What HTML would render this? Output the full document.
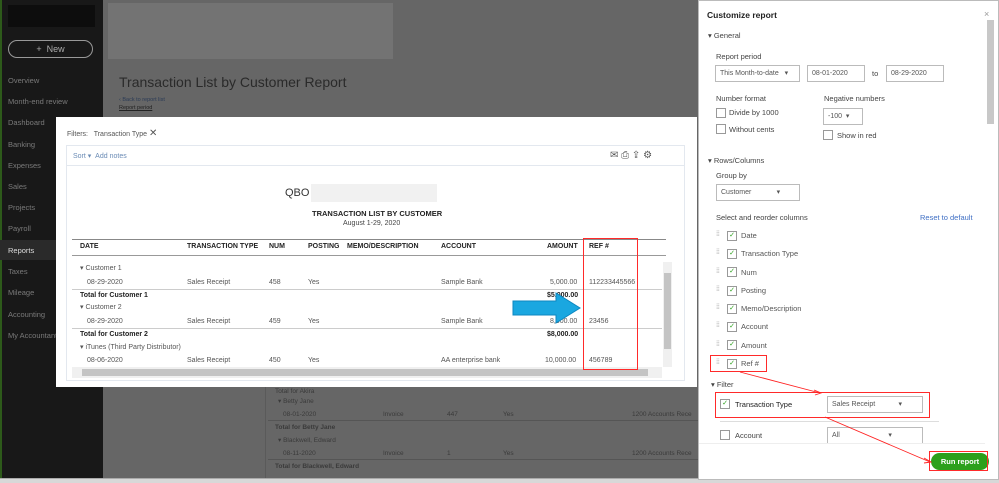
<!DOCTYPE html>
<html><head><meta charset="utf-8"><style>
*{margin:0;padding:0;box-sizing:border-box}
body{width:999px;height:483px;overflow:hidden;position:relative;background:#666;font-family:"Liberation Sans",sans-serif;font-size:8px;color:#333}
.a{position:absolute;white-space:nowrap}
.side{left:0;top:0;width:103px;height:478px;background:#181818;border-left:2px solid #2d5a1a}
.nav{left:8px;color:#7a7a7a;font-size:7.5px}
.th{font-weight:bold;font-size:7px;color:#222;top:243px}
.td{font-size:7px;color:#555}
.tb{font-size:7px;color:#222;font-weight:bold}
.cb{width:10px;height:10px;border:1px solid #999;background:#fff}
.ck{width:10px;height:10px;border:1px solid #999;background:#fff;color:#2ca01c;font-size:7px;line-height:8px;text-align:center}
.lbl{font-size:7.5px;color:#444}
.inp{border:1px solid #bbb;background:#fff;font-size:7px;color:#555;padding:0 4px;line-height:15px;height:17px}
.red{border:1.5px solid #ff2a2a !important;background:transparent}
.dim{color:#3a3a3a;font-size:6.5px}
.hd{left:716px;font-size:7px;color:#bbb;letter-spacing:-1px}
.cl{left:741px;font-size:7.5px;color:#555}
</style></head><body>
<div class="a side"></div>
<div class="a" style="left:8px;top:5px;width:87px;height:22px;background:#0d0d0d"></div>
<div class="a" style="left:8px;top:40px;width:85px;height:18px;border:1px solid #999;border-radius:9px;color:#aaa;font-size:9px;text-align:center;line-height:16px">+&nbsp; New</div>
<div class="a nav" style="top:76px">Overview</div>
<div class="a nav" style="top:97px">Month-end review</div>
<div class="a nav" style="top:118px">Dashboard</div>
<div class="a nav" style="top:140px">Banking</div>
<div class="a nav" style="top:161px">Expenses</div>
<div class="a nav" style="top:182px">Sales</div>
<div class="a nav" style="top:203px">Projects</div>
<div class="a nav" style="top:224px">Payroll</div>
<div class="a" style="left:0;top:240px;width:103px;height:20px;background:#2a2a2a"></div>
<div class="a nav" style="top:246px;color:#ddd">Reports</div>
<div class="a nav" style="top:267px">Taxes</div>
<div class="a nav" style="top:288px">Mileage</div>
<div class="a nav" style="top:310px">Accounting</div>
<div class="a nav" style="top:331px">My Accountant</div>

<div class="a" style="left:108px;top:3px;width:285px;height:56px;background:#737373"></div>
<div class="a" style="left:119px;top:74px;font-size:14px;color:#2a2a2a">Transaction List by Customer Report</div>
<div class="a" style="left:119px;top:97px;font-size:5.5px;color:#2a3a55">‹ Back to report list</div>
<div class="a" style="left:119px;top:105px;font-size:5.5px;color:#222;text-decoration:underline">Report period</div>

<div class="a" style="left:265px;top:387px;width:433px;height:91px;border-left:1px solid #5a5a5a"></div>
<div class="a dim" style="left:275px;top:388px">Total for Akira</div>
<div class="a dim" style="left:278px;top:397px">▾ Betty Jane</div>
<div class="a dim" style="left:283px;top:411px">08-01-2020</div><div class="a dim" style="left:383px;top:411px">Invoice</div><div class="a dim" style="left:447px;top:411px">447</div><div class="a dim" style="left:503px;top:411px">Yes</div><div class="a dim" style="left:632px;top:411px">1200 Accounts Rece</div>
<div class="a" style="left:268px;top:420px;width:430px;height:1px;background:#555"></div>
<div class="a dim" style="left:275px;top:424px;font-weight:bold">Total for Betty Jane</div>
<div class="a dim" style="left:278px;top:436px">▾ Blackwell, Edward</div>
<div class="a dim" style="left:283px;top:450px">08-11-2020</div><div class="a dim" style="left:383px;top:450px">Invoice</div><div class="a dim" style="left:447px;top:450px">1</div><div class="a dim" style="left:503px;top:450px">Yes</div><div class="a dim" style="left:632px;top:450px">1200 Accounts Rece</div>
<div class="a" style="left:268px;top:459px;width:430px;height:1px;background:#555"></div>
<div class="a dim" style="left:275px;top:463px;font-weight:bold">Total for Blackwell, Edward</div>
<div class="a" style="left:0;top:478px;width:999px;height:5px;background:#d8d8d8;border-top:1px solid #aaa"></div>

<!-- report panel -->
<div class="a" style="left:56px;top:117px;width:641px;height:270px;background:#fff"></div>
<div class="a" style="left:67px;top:128px;font-size:7px;color:#555">Filters:&nbsp;&nbsp; Transaction Type <span style="font-size:10px">✕</span></div>
<div class="a" style="left:66px;top:145px;width:619px;height:236px;border:1px solid #e3e8ef"></div>
<div class="a" style="left:66px;top:165px;width:619px;height:1px;background:#e3e8ef"></div>
<div class="a" style="left:73px;top:152px;font-size:7px;color:#6a8bb5">Sort ▾ &nbsp;Add notes</div>
<div class="a" style="left:610px;top:150px;font-size:10px;color:#555">✉ ⎙ ⇪ ⚙</div>
<div class="a" style="left:285px;top:187px;font-size:11px;color:#333">QBO</div>
<div class="a" style="left:311px;top:184px;width:126px;height:18px;background:#f1f1f1"></div>
<div class="a" style="left:312px;top:209px;font-size:7.5px;font-weight:bold;color:#222">TRANSACTION LIST BY CUSTOMER</div>
<div class="a" style="left:343px;top:220px;font-size:7px;color:#444">August 1-29, 2020</div>
<div class="a" style="left:72px;top:239px;width:594px;height:1px;background:#888"></div>
<div class="a" style="left:72px;top:255px;width:594px;height:1px;background:#999"></div>
<div class="a th" style="left:80px">DATE</div><div class="a th" style="left:187px">TRANSACTION TYPE</div><div class="a th" style="left:269px">NUM</div><div class="a th" style="left:308px">POSTING</div><div class="a th" style="left:347px">MEMO/DESCRIPTION</div><div class="a th" style="left:441px">ACCOUNT</div><div class="a th" style="left:547px">AMOUNT</div><div class="a th" style="left:589px">REF #</div>
<div class="a td" style="left:80px;top:264px">▾ Customer 1</div>
<div class="a td" style="left:87px;top:279px">08-29-2020</div><div class="a td" style="left:187px;top:279px">Sales Receipt</div><div class="a td" style="left:269px;top:279px">458</div><div class="a td" style="left:308px;top:279px">Yes</div><div class="a td" style="left:441px;top:279px">Sample Bank</div><div class="a td" style="left:550px;top:279px">5,000.00</div><div class="a td" style="left:589px;top:279px">112233445566</div>
<div class="a" style="left:72px;top:289px;width:590px;height:1px;background:#ccc"></div>
<div class="a tb" style="left:80px;top:292px">Total for Customer 1</div><div class="a tb" style="left:547px;top:292px">$5,000.00</div>
<div class="a td" style="left:80px;top:303px">▾ Customer 2</div>
<div class="a td" style="left:87px;top:318px">08-29-2020</div><div class="a td" style="left:187px;top:318px">Sales Receipt</div><div class="a td" style="left:269px;top:318px">459</div><div class="a td" style="left:308px;top:318px">Yes</div><div class="a td" style="left:441px;top:318px">Sample Bank</div><div class="a td" style="left:550px;top:318px">8,000.00</div><div class="a td" style="left:589px;top:318px">23456</div>
<div class="a" style="left:72px;top:328px;width:590px;height:1px;background:#ccc"></div>
<div class="a tb" style="left:80px;top:331px">Total for Customer 2</div><div class="a tb" style="left:547px;top:331px">$8,000.00</div>
<div class="a td" style="left:80px;top:343px">▾ iTunes (Third Party Distributor)</div>
<div class="a td" style="left:87px;top:357px">08-06-2020</div><div class="a td" style="left:187px;top:357px">Sales Receipt</div><div class="a td" style="left:269px;top:357px">450</div><div class="a td" style="left:308px;top:357px">Yes</div><div class="a td" style="left:441px;top:357px">AA enterprise bank</div><div class="a td" style="left:545px;top:357px">10,000.00</div><div class="a td" style="left:589px;top:357px">456789</div>
<div class="a" style="left:72px;top:367px;width:590px;height:11px;background:#f0f0f0"></div>
<div class="a" style="left:82px;top:369px;width:566px;height:7px;background:#c4c4c4"></div>
<div class="a" style="left:663px;top:262px;width:9px;height:105px;background:#f0f0f0"></div>
<div class="a" style="left:664px;top:273px;width:7px;height:76px;background:#c4c4c4"></div>
<svg class="a" style="left:512px;top:292px" width="70" height="32"><polygon points="1,9 44,9 44,1 68,16 44,31 44,23 1,23" fill="#1aa7e0" stroke="#0d87c0"/></svg>
<div class="a red" style="left:583px;top:238px;width:55px;height:132px"></div>

<!-- right panel -->
<div class="a" style="left:698px;top:0;width:301px;height:480px;background:#fff;border:1px solid #bbb"></div>
<div class="a" style="left:987px;top:20px;width:7px;height:104px;background:#c8c8c8"></div>
<div class="a" style="left:707px;top:10px;font-size:8.5px;font-weight:bold;color:#222">Customize report</div>
<div class="a" style="left:984px;top:9px;font-size:9px;color:#999">×</div>
<div class="a lbl" style="left:708px;top:31px">▾ General</div>
<div class="a lbl" style="left:716px;top:52px">Report period</div>
<div class="a inp" style="left:715px;top:65px;width:85px">This Month-to-date &nbsp;&nbsp;▾</div>
<div class="a inp" style="left:807px;top:65px;width:58px">08-01-2020</div>
<div class="a lbl" style="left:872px;top:69px">to</div>
<div class="a inp" style="left:886px;top:65px;width:58px">08-29-2020</div>
<div class="a lbl" style="left:716px;top:94px">Number format</div>
<div class="a lbl" style="left:824px;top:94px">Negative numbers</div>
<div class="a cb" style="left:716px;top:108px"></div><div class="a lbl" style="left:729px;top:108px">Divide by 1000</div>
<div class="a cb" style="left:716px;top:124px"></div><div class="a lbl" style="left:729px;top:125px">Without cents</div>
<div class="a inp" style="left:823px;top:108px;width:40px">-100 &nbsp;▾</div>
<div class="a cb" style="left:823px;top:130px"></div><div class="a lbl" style="left:837px;top:131px">Show in red</div>
<div class="a lbl" style="left:708px;top:156px">▾ Rows/Columns</div>
<div class="a lbl" style="left:716px;top:171px">Group by</div>
<div class="a inp" style="left:716px;top:184px;width:84px">Customer &nbsp;&nbsp;&nbsp;&nbsp;&nbsp;&nbsp;&nbsp;&nbsp;&nbsp;&nbsp;&nbsp;&nbsp;▾</div>
<div class="a lbl" style="left:716px;top:213px">Select and reorder columns</div>
<div class="a lbl" style="left:920px;top:213px;color:#3f6fc4">Reset to default</div>

<div class="a hd" style="top:231px">⁞⁞⁞</div><div class="a cl" style="top:231px">Date</div>
<div class="a hd" style="top:249px">⁞⁞⁞</div><div class="a cl" style="top:249px">Transaction Type</div>
<div class="a hd" style="top:268px">⁞⁞⁞</div><div class="a cl" style="top:268px">Num</div>
<div class="a hd" style="top:286px">⁞⁞⁞</div><div class="a cl" style="top:286px">Posting</div>
<div class="a hd" style="top:304px">⁞⁞⁞</div><div class="a cl" style="top:304px">Memo/Description</div>
<div class="a hd" style="top:322px">⁞⁞⁞</div><div class="a cl" style="top:322px">Account</div>
<div class="a hd" style="top:341px">⁞⁞⁞</div><div class="a cl" style="top:341px">Amount</div>
<div class="a hd" style="top:359px">⁞⁞⁞</div><div class="a cl" style="top:359px">Ref #</div>
<div class="a ck" style="left:727px;top:231px">✓</div><div class="a ck" style="left:727px;top:249px">✓</div><div class="a ck" style="left:727px;top:267px">✓</div><div class="a ck" style="left:727px;top:286px">✓</div><div class="a ck" style="left:727px;top:304px">✓</div><div class="a ck" style="left:727px;top:322px">✓</div><div class="a ck" style="left:727px;top:340px">✓</div><div class="a ck" style="left:727px;top:359px">✓</div>
<div class="a red" style="left:710px;top:355px;width:57px;height:17px"></div>
<div class="a lbl" style="left:711px;top:380px">▾ Filter</div>
<div class="a red" style="left:715px;top:392px;width:215px;height:26px"></div>
<div class="a ck" style="left:720px;top:399px">✓</div>
<div class="a lbl" style="left:735px;top:400px;color:#222">Transaction Type</div>
<div class="a inp" style="left:827px;top:396px;width:96px">Sales Receipt &nbsp;&nbsp;&nbsp;&nbsp;&nbsp;&nbsp;&nbsp;&nbsp;&nbsp;&nbsp;&nbsp;▾</div>
<div class="a" style="left:720px;top:421px;width:219px;height:1px;background:#ddd"></div>
<div class="a cb" style="left:720px;top:430px"></div><div class="a lbl" style="left:735px;top:431px">Account</div>
<div class="a inp" style="left:827px;top:427px;width:96px">All &nbsp;&nbsp;&nbsp;&nbsp;&nbsp;&nbsp;&nbsp;&nbsp;&nbsp;&nbsp;&nbsp;&nbsp;&nbsp;&nbsp;&nbsp;&nbsp;&nbsp;&nbsp;&nbsp;&nbsp;&nbsp;&nbsp;&nbsp;&nbsp;▾</div>
<div class="a" style="left:699px;top:443px;width:286px;height:35px;background:#fff;border-top:1px solid #eee"></div>
<div class="a" style="left:931px;top:453px;width:58px;height:17px;background:#2ca01c;border-radius:9px;color:#fff;font-weight:bold;font-size:7.5px;text-align:center;line-height:17px">Run report</div>
<div class="a red" style="left:929px;top:451px;width:59px;height:20px"></div>
<svg class="a" style="left:700px;top:360px" width="299" height="123"><g stroke="#f22" stroke-width="0.9" fill="none"><line x1="40" y1="12" x2="120" y2="33"/><polyline points="114,30 121,33 115,35"/><line x1="125" y1="57" x2="230" y2="102"/><polyline points="224,98 231,102 224,103"/></g></svg>
</body></html>
